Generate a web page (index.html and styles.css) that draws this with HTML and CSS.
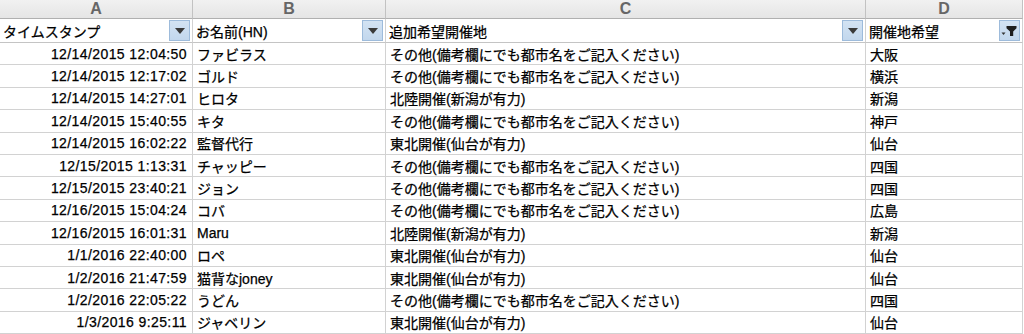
FILE: index.html
```html
<!DOCTYPE html>
<html lang="ja">
<head>
<meta charset="utf-8">
<link rel="stylesheet" href="styles.css">
</head>
<body>
<div class="sheet">
  <div class="col-head">A</div>
  <div class="col-head">B</div>
  <div class="col-head">C</div>
  <div class="col-head">D</div>

  <div class="cell fh"><span class="fh-label">タイムスタンプ</span><span class="fbtn"><span class="tri"></span></span></div>
  <div class="cell fh"><span class="fh-label">お名前(HN)</span><span class="fbtn"><span class="tri"></span></span></div>
  <div class="cell fh"><span class="fh-label">追加希望開催地</span><span class="fbtn"><span class="tri"></span></span></div>
  <div class="cell fh"><span class="fh-label">開催地希望</span><span class="fbtn"><svg width="19" height="15" viewBox="0 0 19 15"><path d="M1.5 9.5h4l-2 2.5z" fill="#333"/><path d="M6.5 3h10v2.2l-3.3 3.2V13H10V8.4L6.5 5.2z" fill="#1e1e1e"/></svg></span></div>

  <div class="cell num">12/14/2015 12:04:50</div><div class="cell">ファビラス</div><div class="cell">その他(備考欄にでも都市名をご記入ください)</div><div class="cell">大阪</div>
  <div class="cell num">12/14/2015 12:17:02</div><div class="cell">ゴルド</div><div class="cell">その他(備考欄にでも都市名をご記入ください)</div><div class="cell">横浜</div>
  <div class="cell num">12/14/2015 14:27:01</div><div class="cell">ヒロタ</div><div class="cell">北陸開催(新潟が有力)</div><div class="cell">新潟</div>
  <div class="cell num">12/14/2015 15:40:55</div><div class="cell">キタ</div><div class="cell">その他(備考欄にでも都市名をご記入ください)</div><div class="cell">神戸</div>
  <div class="cell num">12/14/2015 16:02:22</div><div class="cell">監督代行</div><div class="cell">東北開催(仙台が有力)</div><div class="cell">仙台</div>
  <div class="cell num">12/15/2015 1:13:31</div><div class="cell">チャッピー</div><div class="cell">その他(備考欄にでも都市名をご記入ください)</div><div class="cell">四国</div>
  <div class="cell num">12/15/2015 23:40:21</div><div class="cell">ジョン</div><div class="cell">その他(備考欄にでも都市名をご記入ください)</div><div class="cell">四国</div>
  <div class="cell num">12/16/2015 15:04:24</div><div class="cell">コバ</div><div class="cell">その他(備考欄にでも都市名をご記入ください)</div><div class="cell">広島</div>
  <div class="cell num">12/16/2015 16:01:31</div><div class="cell">Maru</div><div class="cell">北陸開催(新潟が有力)</div><div class="cell">新潟</div>
  <div class="cell num">1/1/2016 22:40:00</div><div class="cell">ロペ</div><div class="cell">東北開催(仙台が有力)</div><div class="cell">仙台</div>
  <div class="cell num">1/2/2016 21:47:59</div><div class="cell">猫背なjoney</div><div class="cell">東北開催(仙台が有力)</div><div class="cell">仙台</div>
  <div class="cell num">1/2/2016 22:05:22</div><div class="cell">うどん</div><div class="cell">その他(備考欄にでも都市名をご記入ください)</div><div class="cell">四国</div>
  <div class="cell num">1/3/2016 9:25:11</div><div class="cell">ジャベリン</div><div class="cell">東北開催(仙台が有力)</div><div class="cell">仙台</div>
</div>
</body>
</html>
```

FILE: styles.css
```css
html, body {
  margin: 0;
  padding: 0;
  background: #ffffff;
  overflow: hidden;
}
.sheet {
  display: grid;
  grid-template-columns: 193px 193px 480px 157px;
  grid-template-rows: 19px 24px repeat(13, 22.4px);
  font-family: "Liberation Sans", "Noto Sans CJK JP", sans-serif;
  font-size: 14px;
  color: #000;
  width: 1024px;
  background: #ffffff;
  -webkit-text-stroke: 0.25px #000;
}
.col-head {
  box-sizing: border-box;
  background: linear-gradient(#f1f1f1, #e5e5e5);
  border-right: 1px solid #c2c2c2;
  border-bottom: 1px solid #b0b0b0;
  display: flex;
  align-items: center;
  justify-content: center;
  font-weight: bold;
  font-size: 16px;
  color: #666666;
  -webkit-text-stroke: 0;
}
.cell {
  box-sizing: border-box;
  border-right: 1px solid #d2d2d2;
  border-bottom: 1px solid #d2d2d2;
  display: flex;
  align-items: center;
  padding: 0 4px 0 4px;
  white-space: nowrap;
  overflow: hidden;
}
.num {
  justify-content: flex-end;
  padding-right: 5px;
  letter-spacing: 0.4px;
}
.fh {
  padding: 0 2px 0 3px;
  justify-content: space-between;
  border-bottom-color: #c4c4c4;
}
.fbtn {
  box-sizing: border-box;
  width: 21px;
  height: 21px;
  border: 1px solid #9dbbdb;
  background: linear-gradient(#d3e3f3, #c2d7ed);
  display: flex;
  align-items: center;
  justify-content: center;
  flex: none;
}
.tri {
  width: 0;
  height: 0;
  border-left: 5px solid transparent;
  border-right: 5px solid transparent;
  border-top: 6px solid #3a3a3a;
}
```
